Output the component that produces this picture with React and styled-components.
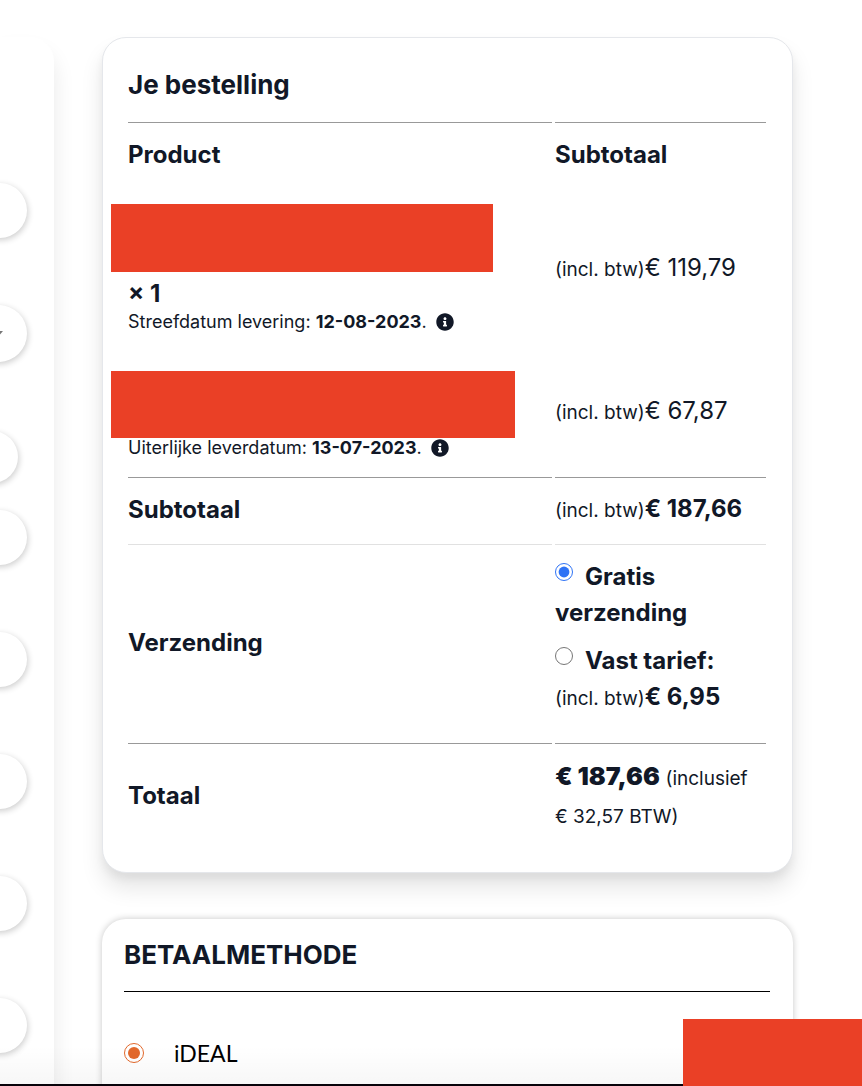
import React, { useState } from "react";
import styled, { createGlobalStyle } from "styled-components";
import { FaInfoCircle } from "react-icons/fa";

const GlobalStyle = createGlobalStyle`
  * {
    box-sizing: border-box;
  }
  body {
    margin: 0;
    background: #fff;
    color: #111827;
    font-family: Inter, "Liberation Sans", sans-serif;
    font-size: 24px;
    line-height: 36px;
  }
`;

const Page = styled.div`
  position: relative;
  display: grid;
  grid-template-columns: 54px minmax(0, 1fr);
  column-gap: 48px;
  height: 100vh;
  padding: 37px 69px 0 0;
  overflow: hidden;
`;

const AddressPanel = styled.form`
  display: flex;
  flex-direction: column;
  align-items: flex-end;
  gap: 67px;
  height: 1200px;
  padding: 146px 27px 0 0;
  border-radius: 0 24px 0 0;
  background: #fff;
  box-shadow: 0 15px 22px rgba(0, 0, 0, 0.09);
`;

const pill = `
  flex: none;
  width: 320px;
  border: none;
  border-radius: 30px;
  background: #fff;
  padding: 0 24px;
  font: inherit;
  box-shadow: 1px 2px 6px rgba(0, 0, 0, 0.2);
`;

const Field = styled.input`
  ${pill}
  height: 55px;
`;

const SelectWrap = styled.div`
  position: relative;
  flex: none;
`;

const Select = styled.select`
  ${pill}
  display: block;
  height: 57px;
  appearance: none;
`;

const SelectArrow = styled.svg`
  position: absolute;
  top: 26px;
  right: 24px;
  width: 10px;
  height: 6px;
`;

const StreetGroup = styled.div`
  display: flex;
  flex-direction: column;
  align-items: flex-end;
  gap: 27px;
  padding-top: 2px;
`;

const StreetField = styled(Field)`
  height: 52px;
  margin-right: 9px;
`;

const Column = styled.main`
  display: flex;
  flex-direction: column;
  gap: 46px;
`;

const OrderCard = styled.section`
  padding: 21px 23px 21px 22px;
  border: 1px solid #e5e7eb;
  border-radius: 24px;
  background: #fff;
  box-shadow: 0 15px 22px rgba(0, 0, 0, 0.1), 0 6px 9px rgba(0, 0, 0, 0.05);
`;

const Title = styled.h3`
  margin: 0;
  padding: ${({ $inset }) => ($inset ? "8px 3px 16px" : "0 0 18px")};
  font-size: 26px;
  font-weight: 700;
  line-height: 36px;
`;

const Table = styled.table`
  width: 100%;
  border-collapse: separate;
  border-spacing: 3px;
  table-layout: fixed;
`;

const PriceCol = styled.col`
  width: 211px;
`;

const Row = styled.tr`
  height: ${({ $height }) => $height}px;

  > * {
    padding: 0;
    text-align: left;
    vertical-align: middle;
    font-weight: 700;
    border-top: ${({ $line }) => ($line ? `1px solid ${$line}` : "none")};
  }
`;

const Product = styled.div`
  padding: ${({ $single }) => ($single ? "4px 0 0" : "0 0 2px")};
`;

const Redacted = styled.div`
  width: ${({ $width }) => $width}px;
  max-width: 100%;
  height: ${({ $height }) => $height}px;
  margin-left: -17px;
  background: #ea4026;
`;

const Quantity = styled.div`
  padding-top: 4px;
`;

const Delivery = styled.div`
  display: flex;
  align-items: center;
  gap: 9px;
  font-size: 18px;
  font-weight: 400;
  line-height: 20px;

  strong {
    font-weight: 700;
  }
`;

const Small = styled.small`
  font-size: 19px;
  font-weight: 400;
  white-space: ${({ $keep }) => ($keep ? "nowrap" : "normal")};
`;

const Amount = styled.span`
  font-size: ${({ $size }) => $size || 24}px;
  font-weight: ${({ $weight }) => $weight || 700};
`;

const Methods = styled.ul`
  margin: 0;
  padding: 0 0 10px;
  list-style: none;

  li + li {
    margin-top: 12px;
  }
`;

const Radio = styled.input`
  width: ${({ $size }) => $size || 18}px;
  height: ${({ $size }) => $size || 18}px;
  margin: 0 12px 0 0;
  accent-color: ${({ $color }) => $color || "#2f73f5"};
`;

const ShippingRadio = styled(Radio)`
  vertical-align: 4px;
`;

const PaymentCard = styled.section`
  height: 400px;
  padding: 18px 23px 18px 22px;
  border-radius: 24px;
  background: #fff;
  box-shadow: 0 0 7px rgba(0, 0, 0, 0.22);
`;

const PaymentOption = styled.label`
  display: flex;
  align-items: center;
  gap: 18px;
  padding-top: 43px;
  border-top: 1px solid #000;
  color: #000;
  font-family: Lato, sans-serif;
  font-size: 23px;
`;

const Fade = styled.div`
  position: absolute;
  right: 0;
  bottom: 0;
  left: 0;
  height: 40px;
  border-bottom: 2px solid #08030a;
  background: linear-gradient(rgba(0, 0, 0, 0), rgba(0, 0, 0, 0.03));
  pointer-events: none;
`;

const CornerBlock = styled.div`
  position: absolute;
  right: 0;
  bottom: 0;
  width: 179px;
  height: 67px;
  background: #ea4026;
`;

const Price = ({ value, weight }) => (
  <>
    <Small $keep>(incl. btw)</Small>
    <Amount $weight={weight}>€ {value}</Amount>
  </>
);

const DeliveryDate = ({ label, date }) => (
  <Delivery>
    <span>
      {label}: <strong>{date}</strong>.
    </span>
    <FaInfoCircle size={18} />
  </Delivery>
);

const App = () => {
  const [shipping, setShipping] = useState("free");

  return (
    <>
      <GlobalStyle />
      <Page>
        <AddressPanel>
          <Field aria-label="Naam" />
          <SelectWrap>
            <Select aria-label="Land" />
            <SelectArrow viewBox="0 0 10 6">
              <path d="M0 0h10L5 6z" fill="#777" />
            </SelectArrow>
          </SelectWrap>
          <StreetGroup>
            <StreetField aria-label="Straat" />
            <Field aria-label="Toevoeging" />
          </StreetGroup>
          <Field aria-label="Postcode" />
          <Field aria-label="Plaats" />
          <Field aria-label="Telefoon" />
          <Field aria-label="E-mail" />
        </AddressPanel>

        <Column>
          <OrderCard>
            <Title $inset>Je bestelling</Title>
            <Table>
              <colgroup>
                <col />
                <PriceCol />
              </colgroup>
              <thead>
                <Row $height={65} $line="#999">
                  <th scope="col">Product</th>
                  <th scope="col">Subtotaal</th>
                </Row>
              </thead>
              <tbody>
                <Row $height={157}>
                  <td>
                    <Product>
                      <Redacted $width={382} $height={68} />
                      <Quantity>× 1</Quantity>
                      <DeliveryDate label="Streefdatum levering" date="12-08-2023" />
                    </Product>
                  </td>
                  <td>
                    <Price value="119,79" weight={400} />
                  </td>
                </Row>
                <Row $height={124}>
                  <td>
                    <Product $single>
                      <Redacted $width={404} $height={67} />
                      <DeliveryDate label="Uiterlijke leverdatum" date="13-07-2023" />
                    </Product>
                  </td>
                  <td>
                    <Price value="67,87" weight={400} />
                  </td>
                </Row>
              </tbody>
              <tfoot>
                <Row $height={64} $line="#999">
                  <th scope="row">Subtotaal</th>
                  <td>
                    <Price value="187,66" />
                  </td>
                </Row>
                <Row $height={196} $line="#e1e1e1">
                  <th scope="row">Verzending</th>
                  <td>
                    <Methods>
                      <li>
                        <ShippingRadio
                          type="radio"
                          id="free"
                          name="shipping"
                          checked={shipping === "free"}
                          onChange={() => setShipping("free")}
                        />
                        <label htmlFor="free">Gratis verzending</label>
                      </li>
                      <li>
                        <ShippingRadio
                          type="radio"
                          id="flat"
                          name="shipping"
                          checked={shipping === "flat"}
                          onChange={() => setShipping("flat")}
                        />
                        <label htmlFor="flat">
                          Vast tarief: <Price value="6,95" />
                        </label>
                      </li>
                    </Methods>
                  </td>
                </Row>
                <Row $height={105} $line="#999">
                  <th scope="row">Totaal</th>
                  <td>
                    <Amount $size={25} $weight={900}>
                      € 187,66
                    </Amount>{" "}
                    <Small>(inclusief €&nbsp;32,57 BTW)</Small>
                  </td>
                </Row>
              </tfoot>
            </Table>
          </OrderCard>

          <PaymentCard>
            <Title>BETAALMETHODE</Title>
            <PaymentOption>
              <Radio type="radio" name="payment" $size={20} $color="#e2682b" defaultChecked />
              iDEAL
            </PaymentOption>
          </PaymentCard>
        </Column>
        <Fade />
        <CornerBlock />
      </Page>
    </>
  );
};

export default App;
